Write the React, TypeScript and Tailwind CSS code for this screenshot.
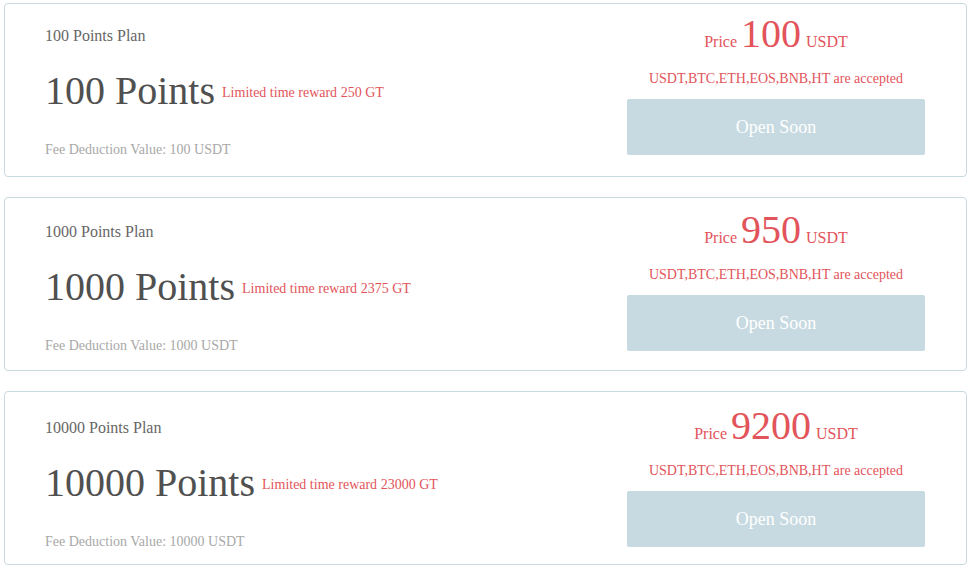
import React from "react";

type Plan = {
  points: string;
  reward: string;
  price: string;
  shift: string;
};

const plans: Plan[] = [
  { points: "100", reward: "250", price: "100", shift: "pt-0" },
  { points: "1000", reward: "2375", price: "950", shift: "pt-[2px]" },
  { points: "10000", reward: "23000", price: "9200", shift: "pt-[4px]" },
];

function Card({ p }: { p: Plan }) {
  return (
    <div className={`flex h-[174px] rounded-[4px] border border-[#c9d9e1] bg-white ${p.shift}`}>
      <div className="flex flex-1 flex-col pl-[40px]">
        <div className="mt-[22px] text-[16px] leading-[20px] text-[#666666]">{p.points} Points Plan</div>
        <div className="mt-[25px] flex items-end">
          <span className="text-[40px] leading-[40px] text-[#505050]">{p.points} Points</span>
          <span className="mb-[8px] ml-[7px] text-[14px] leading-[20px] text-[#e2545a]">Limited time reward {p.reward} GT</span>
        </div>
        <div className="mt-[29px] text-[14px] leading-[20px] text-[#a8a8a8]">Fee Deduction Value: {p.points} USDT</div>
      </div>
      <div className="mr-[41px] flex w-[298px] flex-col items-center">
        <div className="mt-[10px] flex items-baseline justify-center text-[#e2545a]">
          <span className="text-[16px]">Price</span>
          <span className="ml-[4px] text-[40px] leading-[40px]">{p.price}</span>
          <span className="ml-[5px] text-[16px]">USDT</span>
        </div>
        <div className="mt-[15px] text-[14px] leading-[20px] text-[#e2545a]">USDT,BTC,ETH,EOS,BNB,HT are accepted</div>
        <div className="mt-[10px] flex h-[56px] w-[298px] items-center justify-center rounded-[2px] bg-[#c8dae1] text-[18px] text-white">
          Open Soon
        </div>
      </div>
    </div>
  );
}

export default function App() {
  return (
    <div
      className="flex w-[971px] flex-col gap-[20px] bg-white pl-[4px] pr-[4px] pt-[3px]"
      style={{ fontFamily: '"Liberation Serif", "Times New Roman", serif' }}
    >
      {plans.map((p) => (
        <Card key={p.points} p={p} />
      ))}
    </div>
  );
}
